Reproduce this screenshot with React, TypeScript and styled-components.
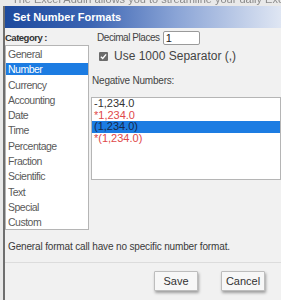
import React from "react";
import styled, { createGlobalStyle } from "styled-components";

const GlobalStyle = createGlobalStyle`
	html, body {
		margin: 0;
		padding: 0;
		background: #ececec;
		font-family: "Liberation Sans", Arial, sans-serif;
	}
`;

const StyledScreen = styled.div`
	width: 281px;
	height: 300px;
	overflow: hidden;
	display: flex;
	flex-direction: column;
	background: #e9e9e9;
`;

const StyledPageText = styled.div`
	height: 6px;
	overflow: hidden;
	padding-left: 12px;
	font-size: 11px;
	line-height: 11px;
	color: #8a8a8a;
	white-space: nowrap;
	filter: blur(0.4px);

	span {
		display: block;
		margin-top: -6px;
	}
`;

const StyledDialog = styled.div`
	flex: 1;
	display: flex;
	flex-direction: column;
	margin-left: 3px;
	border-left: 2px solid #6f6f6f;
	background: #f1f1f1;
`;

const StyledTitleBar = styled.div`
	height: 22px;
	display: flex;
	align-items: center;
	padding-left: 8px;
	background: linear-gradient(90deg, #1d4a9e 0%, #3a63b2 30%, #8aa4d6 62%, #dfe6f3 100%);
	color: #ffffff;
	font-weight: 700;
	font-size: 11px;
`;

const StyledBody = styled.div`
	display: grid;
	grid-template-columns: 84px 1fr;
	column-gap: 2px;
	padding-top: 2px;
`;

const StyledColumn = styled.div`
	display: flex;
	flex-direction: column;
`;

const StyledCategoryLabel = styled.div`
	height: 15px;
	display: flex;
	align-items: center;
	font-size: 9.5px;
	letter-spacing: -0.5px;
	font-weight: 700;
	color: #333;
`;

const StyledList = styled.ul<{ $height: number; $padTop: number; $marginTop?: number }>`
	margin: ${(p) => p.$marginTop ?? 0}px 0 0 0;
	padding: ${(p) => p.$padTop}px 0 0 0;
	height: ${(p) => p.$height}px;
	box-sizing: border-box;
	list-style: none;
	background: #ffffff;
	border: 1px solid #b5b5b5;
`;

const StyledCategoryItem = styled.li<{ $selected?: boolean }>`
	height: 12px;
	line-height: 12px;
	margin-bottom: 3.3px;
	padding-left: 2px;
	font-size: 10.5px;
	letter-spacing: -0.5px;
	color: ${(p) => (p.$selected ? "#ffffff" : "#5a5a5a")};
	background: ${(p) => (p.$selected ? "#1c7ce2" : "transparent")};
`;

const StyledRow = styled.div<{ $indent: number; $height: number; $size: number; $tight: number }>`
	display: flex;
	align-items: center;
	gap: 3px;
	padding-left: ${(p) => p.$indent}px;
	height: ${(p) => p.$height}px;
	font-size: ${(p) => p.$size}px;
	letter-spacing: ${(p) => p.$tight}px;
	color: #444;
`;

const StyledInput = styled.div`
	width: 33px;
	height: 12px;
	border: 1px solid #9a9a9a;
	border-radius: 2px;
	background: #fff;
	font-size: 11px;
	letter-spacing: 0;
	line-height: 12px;
	padding-left: 2px;
	color: #222;
`;

const StyledCheckbox = styled.span`
	width: 9px;
	height: 9px;
	border-radius: 1px;
	background: #6c6c6c;
	display: inline-flex;
	align-items: center;
	justify-content: center;
	margin-right: 3px;
`;

const StyledNegativeItem = styled.li<{ $selected?: boolean; $red?: boolean }>`
	height: 11.5px;
	line-height: 11.5px;
	padding-left: 2px;
	font-size: 11px;
	color: ${(p) => (p.$red ? "#e0484a" : p.$selected ? "#16284a" : "#333")};
	background: ${(p) => (p.$selected ? "#1c7ce2" : "transparent")};
`;

const StyledInfo = styled.div`
	height: 32px;
	display: flex;
	align-items: center;
	padding-left: 3px;
	font-size: 10px;
	letter-spacing: -0.15px;
	color: #3a3a3a;
	border-bottom: 1px solid #dcdcdc;
`;

const StyledFooter = styled.div`
	display: flex;
	justify-content: flex-end;
	gap: 23px;
	padding: 8px 16px 0 0;
`;

const StyledButton = styled.button<{ $width: number }>`
	width: ${(p) => p.$width}px;
	height: 20px;
	padding: 0;
	font-family: "Liberation Sans", Arial, sans-serif;
	font-size: 11px;
	color: #333;
	background: #f7f7f7;
	border: 1px solid #bdbdbd;
	border-radius: 1px;
	box-shadow: 1px 2px 3px rgba(0, 0, 0, 0.35);
`;

const categories = [
	"General",
	"Number",
	"Currency",
	"Accounting",
	"Date",
	"Time",
	"Percentage",
	"Fraction",
	"Scientific",
	"Text",
	"Special",
	"Custom",
];

const negatives = [
	{ label: "-1,234.0", red: false },
	{ label: "*1,234.0", red: true },
	{ label: "(1,234.0)", red: false, selected: true },
	{ label: "*(1,234.0)", red: true },
];

function App() {
	return (
		<>
			<GlobalStyle />
			<StyledScreen>
				<StyledPageText>
					<span>The Excel Addin allows you to streamline your daily Excel use</span>
				</StyledPageText>
				<StyledDialog>
					<StyledTitleBar>Set Number Formats</StyledTitleBar>
					<StyledBody>
						<StyledColumn>
							<StyledCategoryLabel>Category :</StyledCategoryLabel>
							<StyledList $height={185} $padTop={2}>
								{categories.map((c) => (
									<StyledCategoryItem key={c} $selected={c === "Number"}>
										{c}
									</StyledCategoryItem>
								))}
							</StyledList>
						</StyledColumn>
						<StyledColumn>
							<StyledRow $indent={6} $height={15} $size={10} $tight={-0.45}>
								Decimal Places
								<StyledInput>1</StyledInput>
							</StyledRow>
							<StyledRow $indent={8} $height={22} $size={12} $tight={0}>
								<StyledCheckbox>
									<svg width="7" height="7" viewBox="0 0 8 8">
										<path d="M1 4.2 L3.1 6.2 L7 1.6" fill="none" stroke="#fff" strokeWidth="1.6" />
									</svg>
								</StyledCheckbox>
								Use 1000 Separator (,)
							</StyledRow>
							<StyledRow $indent={1} $height={26} $size={10} $tight={-0.2}>
								Negative Numbers:
							</StyledRow>
							<StyledList $height={83} $padTop={0} $marginTop={4}>
								{negatives.map((n) => (
									<StyledNegativeItem key={n.label} $red={n.red} $selected={n.selected}>
										{n.label}
									</StyledNegativeItem>
								))}
							</StyledList>
						</StyledColumn>
					</StyledBody>
					<StyledInfo>General format call have no specific number format.</StyledInfo>
					<StyledFooter>
						<StyledButton $width={44}>Save</StyledButton>
						<StyledButton $width={44}>Cancel</StyledButton>
					</StyledFooter>
				</StyledDialog>
			</StyledScreen>
		</>
	);
}

export default App;
